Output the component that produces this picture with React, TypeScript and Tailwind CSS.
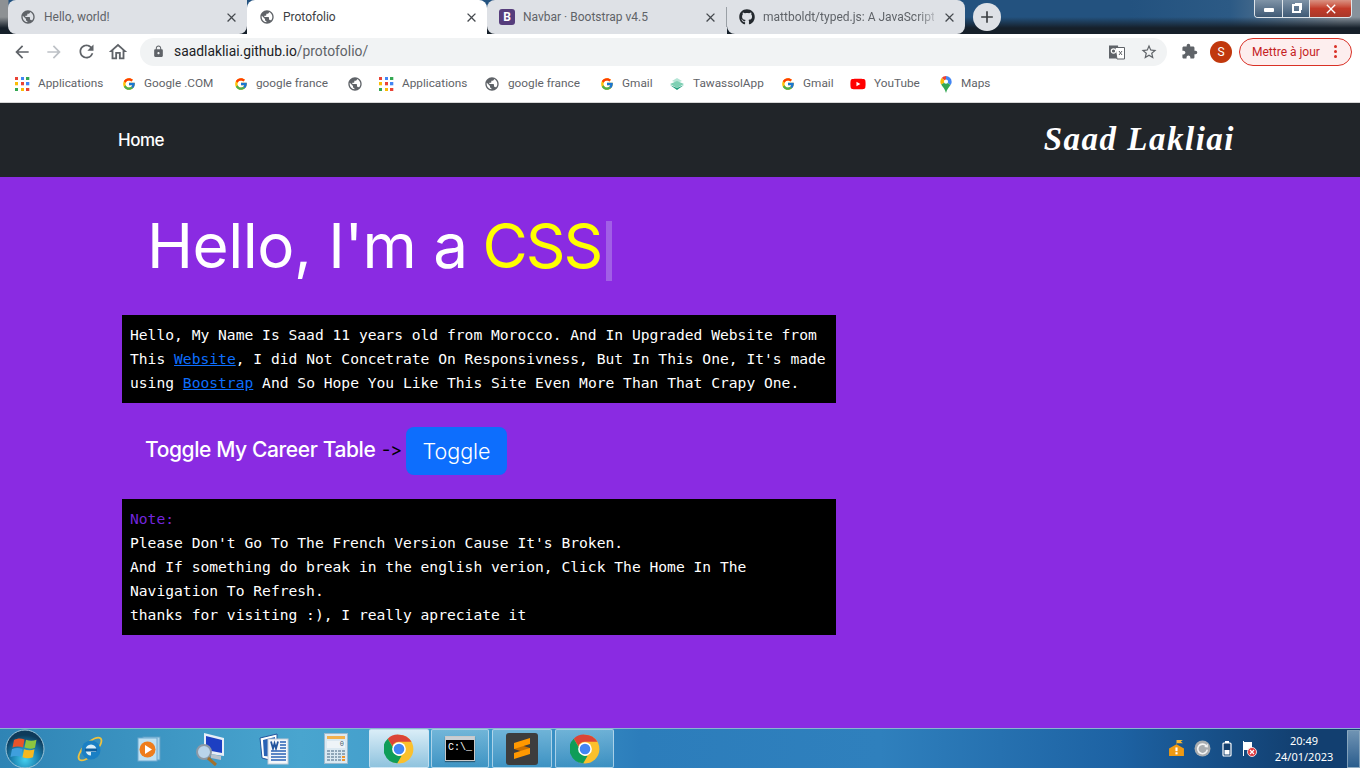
import * as React from "react";
import { MdArrowBack, MdArrowForward, MdRefresh, MdOutlineHome, MdLock, MdStarBorder, MdExtension, MdClose, MdAdd, MdPublic } from "react-icons/md";
import { FaGithub, FaYoutube } from "react-icons/fa";
import { FcGoogle } from "react-icons/fc";

function AppsIcon() {
  const colors = ["#ea4335", "#4285f4", "#34a853", "#fbbc05", "#ea4335", "#4285f4", "#34a853", "#fbbc05", "#ea4335"];
  return (
    <span className="grid h-[14px] w-[15px] shrink-0 grid-cols-3 gap-[2px]">
      {colors.map((c, i) => (
        <svg key={i} viewBox="0 0 4 4" className="h-[3.3px] w-[3.3px]">
          <rect width="4" height="4" fill={c} />
        </svg>
      ))}
    </span>
  );
}

function ChromeIcon({ size = 30 }: { size?: number }) {
  return (
    <svg viewBox="0 0 48 48" width={size} height={size}>
      <circle cx="24" cy="24" r="23" fill="#fbc02d" />
      <path d="M24 1a23 23 0 0 1 19.9 11.5H24a11.5 11.5 0 0 0-10.5 7L6 7.5A23 23 0 0 1 24 1z" fill="#db4437" />
      <path d="M6 7.5l8.6 14.6A11.5 11.5 0 0 0 28 35l-6.8 11.8A23 23 0 0 1 6 7.5z" fill="#0f9d58" />
      <circle cx="24" cy="24" r="11" fill="#fff" />
      <circle cx="24" cy="24" r="8.5" fill="#4285f4" />
    </svg>
  );
}

function BootstrapIcon() {
  return (
    <span className="flex h-4 w-4 shrink-0 items-center justify-center rounded-[3px] bg-[#563d7c] text-[12px] font-bold leading-none text-white">
      B
    </span>
  );
}

function TranslateIcon() {
  return (
    <svg viewBox="0 0 16 16" width="16" height="16">
      <path d="M0 1.5h9l1 13H0z" fill="#5f6368" />
      <path d="M6 3.5h9.5V15H8z" fill="#fff" stroke="#5f6368" />
      <circle cx="4.5" cy="7" r="2.2" fill="none" stroke="#fff" strokeWidth="1.2" />
      <path d="M10 7l3 4M13 7l-3 4" stroke="#5f6368" strokeWidth="1" />
    </svg>
  );
}

function TawassolIcon() {
  return (
    <svg viewBox="0 0 16 14" width="16" height="14">
      <path d="M8 1L13 4 8 6 3 4z" fill="#b5e5d6" />
      <path d="M8 4l7 3-7 4-7-4z" fill="#7ed0b4" />
      <path d="M1 8l7 5 7-5-7 3z" fill="#1f9e7d" />
    </svg>
  );
}

function MapsIcon() {
  return (
    <svg viewBox="0 0 14 18" width="14" height="17">
      <path d="M7 0a6 6 0 0 1 6 6c0 1.4-.5 2.4-1.2 3.4L7 6z" fill="#4285f4" />
      <path d="M7 0a6 6 0 0 0-4.6 2.2L7 6z" fill="#ea4335" />
      <path d="M2.4 2.2A6 6 0 0 0 1 6c0 1 .3 2 .9 3L7 6z" fill="#fbbc05" />
      <path d="M1.9 9C3.4 11.6 6 13.5 7 18c1-4.5 3.6-6.4 4.8-8.6L7 6z" fill="#34a853" />
      <circle cx="7" cy="6" r="2.2" fill="#fff" />
    </svg>
  );
}

function StartOrb() {
  return (
    <svg viewBox="0 0 40 40" width="40" height="40">
      <defs>
        <radialGradient id="orb" cx="50%" cy="78%" r="65%">
          <stop offset="0%" stopColor="#44d0f0" />
          <stop offset="55%" stopColor="#1a7fae" />
          <stop offset="100%" stopColor="#0e3a5a" />
        </radialGradient>
      </defs>
      <circle cx="20" cy="20" r="19" fill="url(#orb)" stroke="#9bc4d8" strokeWidth="1" />
      <path d="M9 11c3.5-2 7-2 10.5-.5L18 18.500c-3.5-1.5-7-1.5-10.5 0z" fill="#e8542b" />
      <path d="M21 10.700c3.5 1.5 7 1.5 10.5 0L30 18.700c-3.5 1.5-7 1-10.5-.2z" fill="#8cc63f" />
      <path d="M7 20c3.5-1.5 7-1.5 10.5 0L16 28c-3.5-1.5-7-1.5-10.5 0z" fill="#3f9fdd" />
      <path d="M19 20.300c3.5 1.300 7 1.5 10.5 0L28 28.300c-3.5 1.5-7 1.300-10.5 0z" fill="#f7b81f" />
    </svg>
  );
}

function IeIcon() {
  return (
    <svg viewBox="0 0 32 32" width="32" height="32">
      <ellipse cx="16" cy="16" rx="15" ry="6" transform="rotate(-45 16 16)" fill="none" stroke="#f0c23c" strokeWidth="1.8" />
      <circle cx="17" cy="17" r="9.5" fill="#1a7fc4" />
      <circle cx="17" cy="17" r="5.5" fill="#d7eefa" />
      <path d="M11 15.5h12v3H11z" fill="#0f5f9e" />
      <path d="M17 19h8c-.8 3-4 6-8 6z" fill="#1a7fc4" />
    </svg>
  );
}

function PlayerIcon() {
  return (
    <svg viewBox="0 0 24 26" width="24" height="26">
      <rect x="6" y="1" width="17" height="23" fill="#a9d3ea" stroke="#5f9fc6" />
      <rect x="1" y="2" width="19" height="23" fill="#bfe0f2" stroke="#6faad0" />
      <circle cx="10.5" cy="13.5" r="8" fill="#ee7d1c" />
      <path d="M8 9l7 4.5-7 4.5z" fill="#fff" />
    </svg>
  );
}

function SearchPcIcon() {
  return (
    <svg viewBox="0 0 32 34" width="32" height="34">
      <path d="M9 1l20 5v18L9 21z" fill="#e7eef7" />
      <path d="M11 4l16 4v13L11 18z" fill="#1d3fc2" />
      <path d="M16 22l10 2v4l-10-2z" fill="#b9c2cc" />
      <circle cx="9" cy="20" r="7" fill="#b9d4ea" stroke="#8c99a6" strokeWidth="2" />
      <path d="M13 26l8 7" stroke="#a3702c" strokeWidth="3" />
    </svg>
  );
}

function WordIcon() {
  return (
    <svg viewBox="0 0 30 32" width="30" height="32">
      <path d="M1 5L18 1v28L3 25z" fill="#fff" stroke="#22559e" strokeWidth="1" />
      <path d="M4 7l12-3v20L5 23z" fill="#2a63b5" />
      <rect x="9" y="6" width="20" height="25" fill="#f4f7fb" stroke="#c0cad6" />
      <path d="M12 8.5l2 7 1.5-5 1.5 5 2-7" fill="none" stroke="#22559e" strokeWidth="1.8" />
      <path d="M21 9h6M21 12h6M21 15h6M12 18h15M12 21h15M12 24h15M12 27h15" stroke="#2a63b5" strokeWidth="1.5" />
    </svg>
  );
}

function CalcIcon() {
  const keys = Array.from({ length: 20 });
  return (
    <span className="flex h-[31px] w-[24px] flex-col gap-[2px] border border-[#9db9cc] bg-[#dbe9f2] p-[2px]">
      <span className="h-[3px] w-full bg-[#f2b04d]" />
      <span className="flex h-[7px] items-center justify-end bg-[#eef4f8] pr-[1px] text-[7px] leading-none text-[#44586a] [font-family:'Liberation_Mono',monospace]">
        0
      </span>
      <span className="grid grid-cols-5 gap-[1px]">
        {keys.map((_, i) => (
          <span key={i} className={i === 14 || i === 19 ? "h-[2px] bg-[#f0932b]" : "h-[2px] bg-[#8fa6b8]"} />
        ))}
      </span>
    </span>
  );
}

function CmdIcon() {
  return (
    <span className="flex h-[25px] w-[30px] flex-col border border-[#c8c8c8] bg-black shadow-[0_1px_1px_rgba(0,0,0,0.4)]">
      <span className="h-[3px] bg-[#c9ced4]" />
      <span className="pl-[2px] pt-[3px] text-[10px] leading-none text-white [font-family:'Liberation_Mono',monospace]">C:\_</span>
    </span>
  );
}

function SublimeIcon() {
  return (
    <span className="flex h-8 w-8 items-center justify-center rounded-[3px] bg-[#3d3d3d]">
      <svg viewBox="0 0 20 24" width="20" height="24">
        <path d="M18 11L2 6v6l16 5z" fill="#c96f00" />
        <path d="M18 1v6L2 12V6z" fill="#ff9800" />
        <path d="M18 11v6L2 22v-6z" fill="#ff9800" />
      </svg>
    </span>
  );
}

function TrayFlag() {
  return (
    <svg viewBox="0 0 16 16" width="17" height="17">
      <path d="M1 15V8l7-4 7 4v7z" fill="#f09a13" />
      <path d="M8 4V0h6l-2 1.5 2 1.5H8.5" fill="#f7b733" />
      <rect x="7" y="7" width="2" height="3.5" fill="#fff" />
      <rect x="7" y="11.5" width="2" height="2" fill="#fff" />
    </svg>
  );
}

function TrayUpdate() {
  return (
    <svg viewBox="0 0 16 16" width="17" height="17">
      <circle cx="8" cy="8" r="7.5" fill="#a9adb0" />
      <path d="M11.5 5.5A4.5 4.5 0 1 0 12.5 9" fill="none" stroke="#f4f4f4" strokeWidth="1.5" />
      <path d="M9.5 6.5l3.5.5V3.5z" fill="#f4f4f4" />
    </svg>
  );
}

function TrayBattery() {
  return (
    <svg viewBox="0 0 10 16" width="10" height="16">
      <rect x="3" y="0" width="4" height="2" fill="#fff" />
      <rect x="1" y="2" width="8" height="13" rx="1" fill="#14406f" stroke="#fff" strokeWidth="1.2" />
      <rect x="2.5" y="9" width="5" height="4.5" fill="#fff" />
    </svg>
  );
}

function TrayActionFlag() {
  return (
    <svg viewBox="0 0 16 16" width="16" height="16">
      <path d="M2 0h1v15H2z" fill="#fff" />
      <path d="M3 1h8v8H3z" fill="#fff" />
      <circle cx="11" cy="11" r="4.5" fill="#e0393e" stroke="#fff" strokeWidth="0.8" />
      <path d="M9 9l4 4M13 9l-4 4" stroke="#fff" strokeWidth="1.2" />
    </svg>
  );
}

function Tab({ title, icon, active, fade, className }: { title: string; icon: React.ReactNode; active?: boolean; fade?: boolean; className: string }) {
  return (
    <div className={`flex h-[34px] items-center pl-[12px] pr-[8px] ${active ? "bg-white text-[#3c4043]" : "bg-[#dee1e6] text-[#5f6368]"} ${className}`}>
      <span className="flex w-[24px] shrink-0 items-center">{icon}</span>
      <span className={`min-w-0 flex-1 overflow-hidden whitespace-nowrap text-[12px] ${fade ? "[mask-image:linear-gradient(to_right,#000_90%,rgba(0,0,0,0.3)_100%)]" : ""}`}>
        {title}
      </span>
      <MdClose size={15} className="ml-2 shrink-0 text-[#45494e]" />
    </div>
  );
}

function Bookmark({ icon, label, width }: { icon: React.ReactNode; label?: string; width: string }) {
  return (
    <div className={`flex shrink-0 items-center gap-[8px] ${width}`}>
      {icon}
      {label && <span className="whitespace-nowrap">{label}</span>}
    </div>
  );
}

function TaskButton({ children, active, className }: { children: React.ReactNode; active?: boolean; className: string }) {
  return (
    <div
      className={`flex h-[39px] items-center justify-center rounded-[2px] border border-[#cfe6f3]/70 ${className} ${
        active ? "bg-gradient-to-b from-[#d9edf7] to-[#8fc3de]" : "bg-gradient-to-b from-[#7dbcdc]/80 to-[#3e93c2]/80"
      }`}
    >
      {children}
    </div>
  );
}

const globe = <MdPublic size={16} className="shrink-0 text-[#5f6368]" />;
const google = <FcGoogle size={14} className="shrink-0" />;

export default function App() {
  return (
    <div className="flex h-[768px] w-[1360px] flex-col overflow-hidden bg-[#8a2be2] [font-family:Roboto,'Noto_Sans',sans-serif]">
      {/* tab strip */}
      <div className="flex h-[34px] shrink-0 bg-[linear-gradient(to_bottom,rgba(22,32,42,0)_0px,rgba(22,32,42,0)_17px,rgba(22,32,42,1)_28px),linear-gradient(to_right,#8d9194_0px,#8d9194_8px,#23527f_9px,#23527f_1130px,#2c5a85_1230px,#87929c_1340px)]">
        <div className="w-[8px]" />
        <Tab className="w-[239px] rounded-b-lg rounded-tl-lg" title="Hello, world!" icon={globe} />
        <Tab className="w-[240px] rounded-t-lg" active title="Protofolio" icon={globe} />
        <Tab className="w-[239px] rounded-bl-lg rounded-tl-lg" title="Navbar · Bootstrap v4.5" icon={<BootstrapIcon />} />
        <div className="flex h-[34px] items-center bg-[#dee1e6]">
          <span className="h-[20px] w-px bg-[#9aa0a6]" />
        </div>
        <Tab className="w-[238px] rounded-b-lg rounded-tr-lg" fade title="mattboldt/typed.js: A JavaScript T" icon={<FaGithub size={16} className="text-[#24292e]" />} />
        <div className="ml-[8px] mt-[3px] flex h-[28px] w-[28px] items-center justify-center rounded-full bg-[#dee1e6]">
          <MdAdd size={20} className="text-[#3c4043]" />
        </div>
        {/* window controls */}
        <div className="ml-auto mr-[8px] flex h-[18px] overflow-hidden rounded-b-[4px] border border-t-0 border-[#dfe5ea]">
          <div className="flex w-[28px] items-center justify-center border-r border-[#dfe5ea] bg-gradient-to-b from-[#7f93a7] to-[#3f5a75]">
            <span className="mt-[3px] h-[4px] w-[10px] rounded-[1px] bg-white" />
          </div>
          <div className="flex w-[27px] items-center justify-center border-r border-[#dfe5ea] bg-gradient-to-b from-[#7f93a7] to-[#3f5a75]">
            <span className="h-[9px] w-[9px] border-2 border-white shadow-[2px_-2px_0_-1px_#fff]" />
          </div>
          <div className="flex w-[41px] items-center justify-center bg-gradient-to-b from-[#d99283] via-[#c33b29] to-[#a8382a] text-[12px] font-bold leading-none text-white">
            <MdClose size={16} />
          </div>
        </div>
      </div>

      {/* toolbar */}
      <div className="flex h-[35px] shrink-0 items-center bg-white pl-[12px] pr-[8px]">
        <MdArrowBack size={20} className="text-[#5f6368]" />
        <MdArrowForward size={20} className="ml-[12px] text-[#bdc1c6]" />
        <MdRefresh size={21} className="ml-[12px] text-[#5f6368]" />
        <MdOutlineHome size={22} className="ml-[10px] text-[#5f6368]" />
        <div className="ml-[11px] flex h-[28px] w-[1027px] items-center rounded-full bg-[#f1f3f4] pl-[12px] pr-[9px]">
          <MdLock size={13} className="text-[#5f6368]" />
          <span className="ml-[9px] text-[13.85px] text-[#202124]">
            saadlakliai.github.io<span className="text-[#5f6368]">/protofolio/</span>
          </span>
          <span className="ml-auto flex items-center gap-[15px]">
            <TranslateIcon />
            <MdStarBorder size={18} className="text-[#5f6368]" />
          </span>
        </div>
        <MdExtension size={17} className="ml-[14px] text-[#5f6368]" />
        <span className="ml-[12px] flex h-[22px] w-[22px] items-center justify-center rounded-full bg-[#c1380d] text-[12px] text-white">S</span>
        <div className="ml-[7px] flex h-[28px] w-[113px] items-center rounded-full border border-[#d93025] bg-[#fdeeee] pl-[12px] text-[12px] text-[#c5221f]">
          <span className="whitespace-nowrap">Mettre à jour</span>
          <span className="ml-[14px] flex flex-col gap-[2px]">
            <span className="h-[3px] w-[3px] rounded-full bg-[#d93025]" />
            <span className="h-[3px] w-[3px] rounded-full bg-[#d93025]" />
            <span className="h-[3px] w-[3px] rounded-full bg-[#d93025]" />
          </span>
        </div>
      </div>

      {/* bookmarks */}
      <div className="flex h-[34px] shrink-0 items-center border-b border-[#d6d6d6] bg-white pb-[3px] pl-[15px] text-[11.8px] text-[#5f6368]">
        <Bookmark width="w-[107px]" icon={<AppsIcon />} label="Applications" />
        <Bookmark width="w-[112px]" icon={google} label="Google .COM" />
        <Bookmark width="w-[113px]" icon={google} label="google france" />
        <Bookmark width="w-[32px]" icon={globe} />
        <Bookmark width="w-[105px]" icon={<AppsIcon />} label="Applications" />
        <Bookmark width="w-[116px]" icon={globe} label="google france" />
        <Bookmark width="w-[69px]" icon={google} label="Gmail" />
        <Bookmark width="w-[112px]" icon={<TawassolIcon />} label="TawassolApp" />
        <Bookmark width="w-[69px]" icon={google} label="Gmail" />
        <Bookmark width="w-[89px]" icon={<FaYoutube size={16} className="shrink-0 text-[#f00]" />} label="YouTube" />
        <Bookmark width="w-[60px]" icon={<MapsIcon />} label="Maps" />
      </div>

      {/* page navbar */}
      <nav className="flex h-[74px] shrink-0 items-center justify-between bg-[#212529] pl-[118px] pr-[125px]">
        <a className="mt-[2px] text-[17px] font-medium tracking-[-0.5px] text-white [font-family:Inter,sans-serif]">Home</a>
        <span className="text-[33px] font-bold italic tracking-[1.5px] text-white [font-family:'Liberation_Serif',cursive]">Saad Lakliai</span>
      </nav>

      {/* page body */}
      <main className="flex min-h-0 flex-1 flex-col pl-[122px] [font-family:Inter,sans-serif] [font-variant-ligatures:none]">
        <h1 className="mt-[35px] flex h-[68px] items-center pl-[25px] text-[62px] font-normal leading-none tracking-[-0.5px] text-white">
          Hello, I'm a&nbsp;<span className="-ml-[2px] tracking-[-2px] text-[#ffff00]">CSS</span>
          <span className="ml-[5px] mt-[9px] h-[60px] w-[6px] bg-[#a15fe6]" />
        </h1>

        <p className="mt-[35px] w-[714px] bg-black px-2 py-2 text-[14.63px] leading-[24px] text-white [font-family:'DejaVu_Sans_Mono',monospace]">
          Hello, My Name Is Saad 11 years old from Morocco. And In Upgraded Website from This{" "}
          <a className="text-[#0d6efd] underline">Website</a>, I did Not Concetrate On Responsivness, But In This One, It's made using{" "}
          <a className="text-[#0d6efd] underline">Boostrap</a> And So Hope You Like This Site Even More Than That Crapy One.
        </p>

        <div className="mt-[24px] flex h-[48px] items-center pl-[23px]">
          <span className="-mt-[2px] w-[231px] whitespace-nowrap text-[21px] font-medium tracking-[-0.4px] text-white">Toggle My Career Table</span>
          <span className="-mt-[3px] ml-[6px] w-[18px] whitespace-nowrap text-[18px] text-black">-&gt;</span>
          <button className="ml-[6px] h-[48px] w-[101px] rounded-[8px] bg-[#0d6efd] text-[21.5px] font-light text-white">Toggle</button>
        </div>

        <div className="mt-[24px] w-[714px] bg-black px-2 py-2 text-[14.63px] leading-[24px] text-white [font-family:'DejaVu_Sans_Mono',monospace]">
          <div className="text-[#7326dc]">Note:</div>
          <div>Please Don't Go To The French Version Cause It's Broken.</div>
          <div>And If something do break in the english verion, Click The Home In The Navigation To Refresh.</div>
          <div>thanks for visiting :), I really apreciate it</div>
        </div>
      </main>

      {/* windows taskbar */}
      <footer className="flex h-[40px] shrink-0 items-center border-t border-[#8ab4cf] bg-[linear-gradient(to_right,#2f84b5_0px,#49a5cf_300px,#3d96c7_520px,#2c7dbb_640px,#2f80bd_880px,#1d62a3_1120px,#123f70_1300px,#123f70_1360px)] pl-[5px] text-white">
        <StartOrb />
        <div className="ml-[29px] flex w-[32px] justify-center"><IeIcon /></div>
        <div className="ml-[27px] flex w-[32px] justify-center"><PlayerIcon /></div>
        <div className="ml-[30px] flex w-[32px] justify-center"><SearchPcIcon /></div>
        <div className="ml-[31px] flex w-[32px] justify-center"><WordIcon /></div>
        <div className="ml-[30px] flex w-[32px] justify-center"><CalcIcon /></div>
        <div className="ml-[17px] flex">
          <TaskButton active className="w-[60px]"><ChromeIcon size={30} /></TaskButton>
          <TaskButton className="ml-[2px] w-[58px]"><CmdIcon /></TaskButton>
          <TaskButton className="ml-[3px] w-[60px]"><SublimeIcon /></TaskButton>
          <TaskButton className="ml-[3px] w-[59px]"><ChromeIcon size={30} /></TaskButton>
        </div>
        <div className="ml-auto flex items-center">
          <TrayFlag />
          <span className="ml-[9px]"><TrayUpdate /></span>
          <span className="ml-[11px]"><TrayBattery /></span>
          <span className="ml-[9px]"><TrayActionFlag /></span>
          <div className="ml-[11px] flex w-[72px] flex-col items-center text-[11px] leading-[16px] [font-family:'Noto_Sans',sans-serif]">
            <span>20:49</span>
            <span>24/01/2023</span>
          </div>
          <div className="ml-[7px] h-[38px] w-[13px] border border-[#9db6c9]/70 bg-gradient-to-b from-[#6f93b3] to-[#2a5d8d]" />
        </div>
      </footer>
    </div>
  );
}
